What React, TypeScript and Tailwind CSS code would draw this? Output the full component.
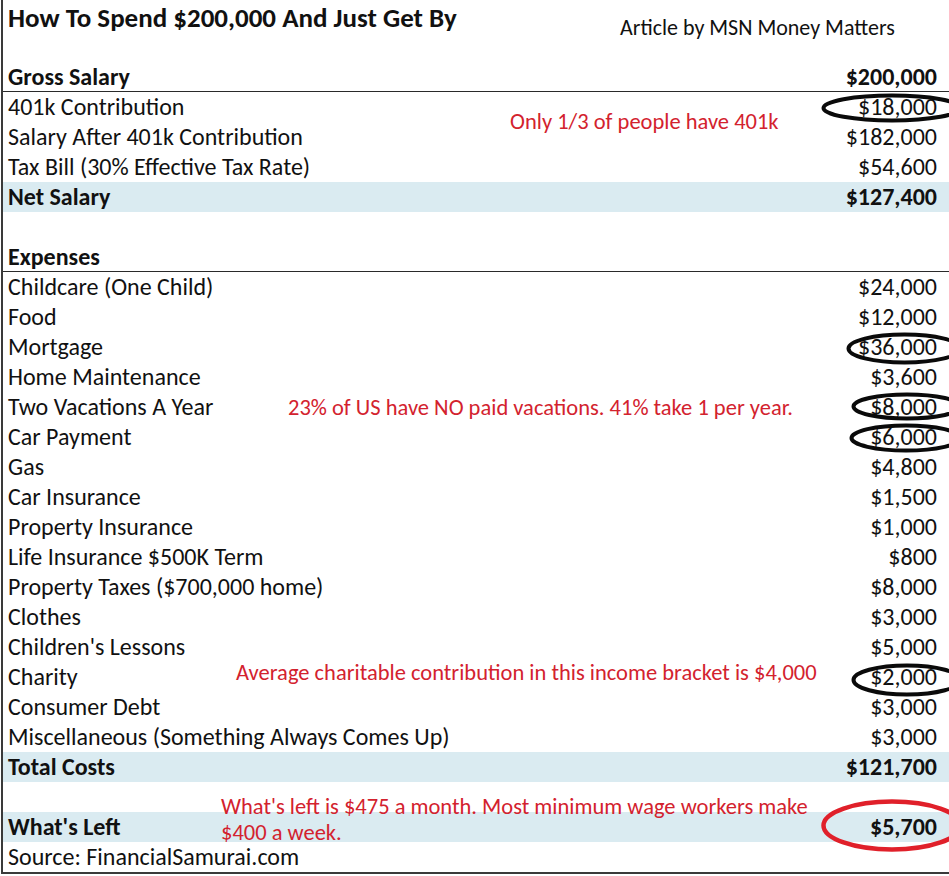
import React, { FC } from "react";

interface Ring {
  left: number;
  top: number;
  w: number;
  h: number;
  red?: boolean;
}

interface Note {
  left: number;
  top: number;
  lines: string[];
}

interface Row {
  label?: string;
  value?: string;
  bold?: boolean;
  shaded?: boolean;
  ruled?: boolean;
  ring?: Ring;
  note?: Note;
}

const rows: Row[] = [
  {},
  { label: "Gross Salary", value: "$200,000", bold: true, ruled: true },
  {
    label: "401k Contribution",
    value: "$18,000",
    ring: { left: 818, top: 1, w: 142, h: 30 },
    note: { left: 507, top: 19, lines: ["Only 1/3 of people have 401k"] },
  },
  { label: "Salary After 401k Contribution", value: "$182,000" },
  { label: "Tax Bill (30% Effective Tax Rate)", value: "$54,600" },
  { label: "Net Salary", value: "$127,400", bold: true, shaded: true },
  {},
  { label: "Expenses", bold: true, ruled: true },
  { label: "Childcare (One Child)", value: "$24,000" },
  { label: "Food", value: "$12,000" },
  {
    label: "Mortgage",
    value: "$36,000",
    ring: { left: 843, top: 0, w: 117, h: 33 },
  },
  { label: "Home Maintenance", value: "$3,600" },
  {
    label: "Two Vacations A Year",
    value: "$8,000",
    ring: { left: 848, top: 0, w: 112, h: 29 },
    note: {
      left: 285,
      top: 5,
      lines: ["23% of US have NO paid vacations. 41% take 1 per year."],
    },
  },
  {
    label: "Car Payment",
    value: "$6,000",
    ring: { left: 846, top: 1, w: 114, h: 30 },
  },
  { label: "Gas", value: "$4,800" },
  { label: "Car Insurance", value: "$1,500" },
  { label: "Property Insurance", value: "$1,000" },
  { label: "Life Insurance $500K Term", value: "$800" },
  { label: "Property Taxes ($700,000 home)", value: "$8,000" },
  { label: "Clothes", value: "$3,000" },
  { label: "Children's Lessons", value: "$5,000" },
  {
    label: "Charity",
    value: "$2,000",
    ring: { left: 848, top: 1, w: 112, h: 34 },
    note: {
      left: 233,
      top: 0,
      lines: ["Average charitable contribution in this income bracket is $4,000"],
    },
  },
  { label: "Consumer Debt", value: "$3,000" },
  { label: "Miscellaneous (Something Always Comes Up)", value: "$3,000" },
  { label: "Total Costs", value: "$121,700", bold: true, shaded: true },
  {},
  {
    label: "What's Left",
    value: "$5,700",
    bold: true,
    shaded: true,
    ring: { left: 818, top: -13, w: 142, h: 53, red: true },
    note: {
      left: 218,
      top: -16,
      lines: [
        "What's left is $475 a month. Most minimum wage workers make",
        "$400 a week.",
      ],
    },
  },
  { label: "Source: FinancialSamurai.com" },
];

const font = { fontFamily: '"Carlito", "Lato", "Liberation Sans", sans-serif' };

const SheetRow: FC<{ row: Row }> = ({ row }) => (
  <div
    className={`relative h-[30px] flex items-center justify-between pl-[5px] pr-[12px] text-[24px] leading-[20px] ${
      row.bold ? "font-bold" : ""
    } ${row.shaded ? "bg-[#daebf1]" : ""} ${
      row.ruled ? "border-b-[1.5px] border-[#2a2a2a]" : ""
    }`}
  >
    <span>{row.label}</span>
    <span>{row.value}</span>

    {/* Red remark text box laid over the sheet */}
    {row.note && (
      <div
        className="absolute flex flex-col gap-[4px] whitespace-nowrap text-[22.5px] leading-[22px] font-normal text-[#d3222e]"
        style={{ left: row.note.left, top: row.note.top }}
      >
        {row.note.lines.map((line, i) => (
          <div key={i}>{line}</div>
        ))}
      </div>
    )}

    {/* Hand-drawn ring around the value */}
    {row.ring && (
      <svg
        className="absolute"
        style={{
          left: row.ring.left,
          top: row.ring.top,
          width: row.ring.w,
          height: row.ring.h,
        }}
        viewBox={`0 0 ${row.ring.w} ${row.ring.h}`}
      >
        <ellipse
          cx={row.ring.w / 2}
          cy={row.ring.h / 2}
          rx={row.ring.w / 2 - 2.5}
          ry={row.ring.h / 2 - 2.5}
          fill="none"
          stroke={row.ring.red ? "#e0202a" : "#0a0a0a"}
          strokeWidth={row.ring.red ? 4.5 : 4}
        />
      </svg>
    )}
  </div>
);

const App: FC = () => {
  return (
    <div
      className="w-[949px] h-[876px] bg-white overflow-hidden text-[#111]"
      style={font}
    >
      {/* Sheet */}
      <div className="ml-[1px] pt-[2px] border-l-2 border-b-2 border-[#3a3a3a] w-[948px]">
        {/* Title */}
        <div className="relative h-[30px] flex items-center pl-[5px] text-[27px] font-bold leading-none">
          How To Spend $200,000 And Just Get By
          <div className="absolute left-[617px] top-[12px] text-[22px] leading-[28px] font-normal text-[#111]">
            Article by MSN Money Matters
          </div>
        </div>

        {rows.map((row, i) => (
          <SheetRow key={i} row={row} />
        ))}
      </div>
    </div>
  );
};

export default App;
